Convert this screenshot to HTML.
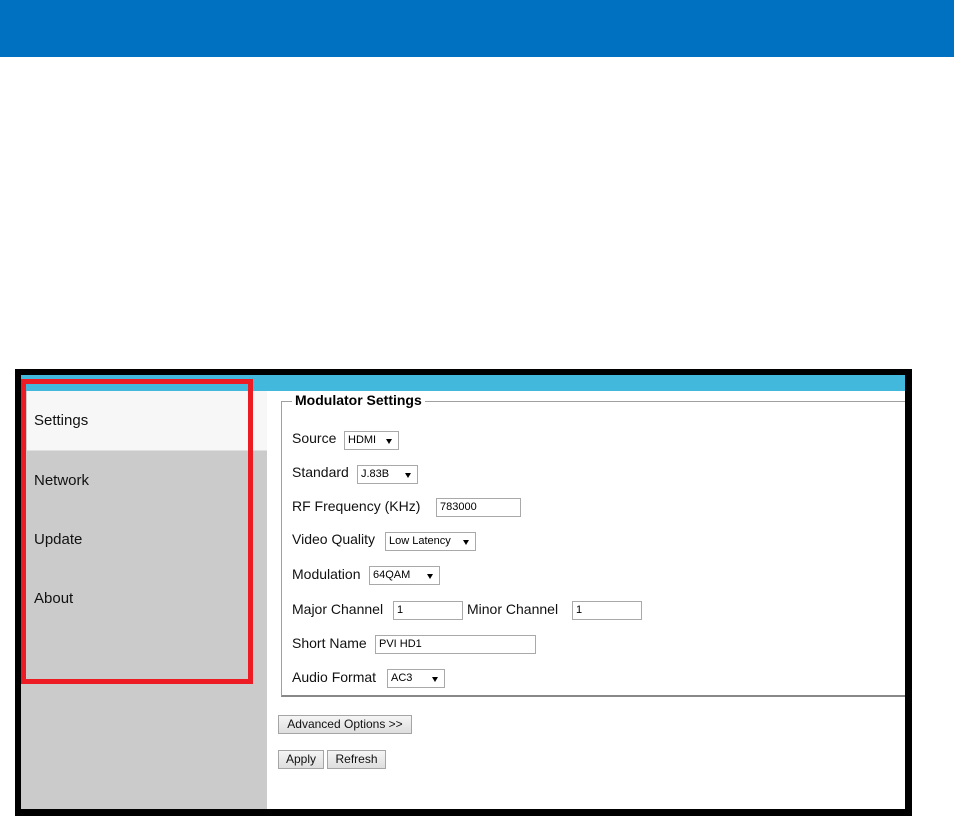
<!DOCTYPE html>
<html><head><style>
*{margin:0;padding:0;box-sizing:border-box}
body{width:954px;height:827px;background:#fff;position:relative;font-family:"Liberation Sans",Arial,sans-serif;overflow:hidden}
.a{position:absolute}
.lbl{position:absolute;font-size:14px;color:#111;white-space:nowrap}
.sel,.inp{position:absolute;height:19px;border:1px solid #a9a9a9;background:#fff;font-size:11px;line-height:17px;padding-left:3px;color:#000;white-space:nowrap}
.sel:after{content:"";position:absolute;right:6px;top:7px;border-left:3px solid transparent;border-right:3px solid transparent;border-top:5px solid #000}
.btn{position:absolute;height:19px;border:1px solid #a5a5a5;background:linear-gradient(#f5f5f5,#dedede);font-size:12px;line-height:17px;text-align:center;color:#111}
.nav{position:absolute;left:34px;font-size:15px;color:#111}
</style></head><body>
<div class="a" style="left:0;top:0;width:954px;height:57px;background:#0070c0"></div>
<div class="a" style="left:15px;top:369px;width:897px;height:447px;background:#000"></div>
<div class="a" style="left:21px;top:375px;width:884px;height:434px;background:#fff"></div>
<div class="a" style="left:21px;top:375px;width:884px;height:16px;background:#42b8dc"></div>
<div class="a" style="left:21px;top:391px;width:246px;height:418px;background:#cbcbcb"></div>
<div class="a" style="left:27px;top:391px;width:240px;height:60px;background:#f7f7f7;border-bottom:1px solid #e0e0e0"></div>
<div class="a" style="left:21px;top:379px;width:232px;height:305px;border:5px solid #ed1c24"></div>
<div class="nav" style="top:412px">Settings</div>
<div class="nav" style="top:472px">Network</div>
<div class="nav" style="top:531px">Update</div>
<div class="nav" style="top:590px">About</div>

<div class="a" style="left:281px;top:401px;width:624px;height:296px;border:1px solid #a0a0a0;border-right:none;border-bottom:2px solid #888"></div>
<div class="a" style="left:292px;top:392px;background:#fff;padding:0 3px;font-size:14px;font-weight:bold;color:#000">Modulator Settings</div>

<div class="lbl" style="left:292px;top:430px">Source</div><div class="sel" style="left:344px;top:431px;width:55px">HDMI</div>
<div class="lbl" style="left:292px;top:464px">Standard</div><div class="sel" style="left:357px;top:465px;width:61px">J.83B</div>
<div class="lbl" style="left:292px;top:498px">RF Frequency (KHz)</div><div class="inp" style="left:436px;top:498px;width:85px">783000</div>
<div class="lbl" style="left:292px;top:531px">Video Quality</div><div class="sel" style="left:385px;top:532px;width:91px">Low Latency</div>
<div class="lbl" style="left:292px;top:566px">Modulation</div><div class="sel" style="left:369px;top:566px;width:71px">64QAM</div>
<div class="lbl" style="left:292px;top:601px">Major Channel</div><div class="inp" style="left:393px;top:601px;width:70px">1</div>
<div class="lbl" style="left:467px;top:601px">Minor Channel</div><div class="inp" style="left:572px;top:601px;width:70px">1</div>
<div class="lbl" style="left:292px;top:635px">Short Name</div><div class="inp" style="left:375px;top:635px;width:161px">PVI HD1</div>
<div class="lbl" style="left:292px;top:669px">Audio Format</div><div class="sel" style="left:387px;top:669px;width:58px">AC3</div>

<div class="btn" style="left:278px;top:715px;width:134px">Advanced Options &gt;&gt;</div>
<div class="btn" style="left:278px;top:750px;width:46px">Apply</div>
<div class="btn" style="left:327px;top:750px;width:59px">Refresh</div>
</body></html>
